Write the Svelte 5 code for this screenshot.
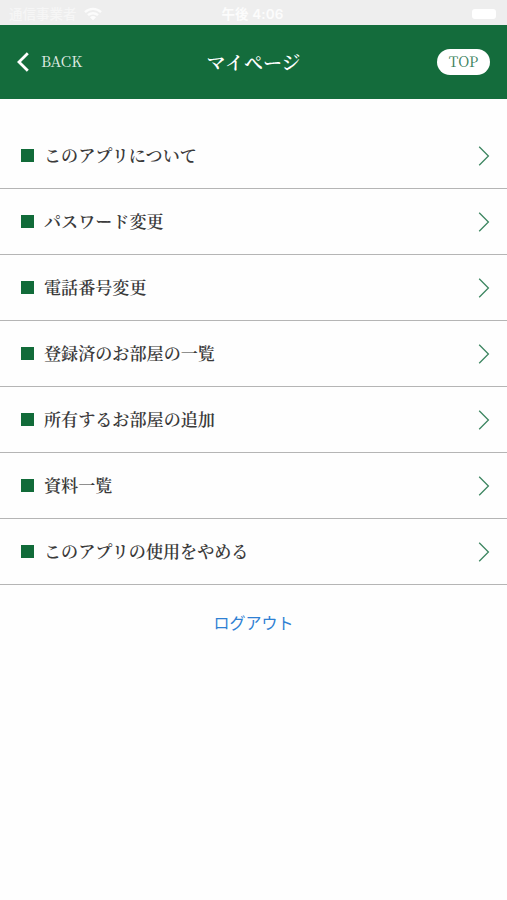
<script lang="ts">
    const menuItems: string[] = [
        'このアプリについて',
        'パスワード変更',
        '電話番号変更',
        '登録済のお部屋の一覧',
        '所有するお部屋の追加',
        '資料一覧',
        'このアプリの使用をやめる'
    ];
</script>

<div class="screen">
    <!-- Status Bar -->
    <div class="status-bar">
        <div class="carrier">
            <span>通信事業者</span>
            <svg class="wifi" width="18" height="14" viewBox="0 0 18 14" fill="none" stroke="currentColor" stroke-width="2.4">
                <path d="M1 5.2C5.6 0.8 12.4 0.8 17 5.2" />
                <path d="M4 8.2C6.8 5.6 11.2 5.6 14 8.2" />
                <path d="M9 13.2L6 10.2C7.8 8.7 10.2 8.7 12 10.2Z" fill="currentColor" stroke="none" />
            </svg>
        </div>
        <span class="time">午後 4:06</span>
        <span class="battery"></span>
    </div>

    <header class="header">
        <button class="back">
            <svg width="12" height="20" viewBox="0 0 12 20" fill="none" stroke="currentColor" stroke-width="2.8">
                <path d="M10.8 1.2L2 10L10.8 18.8" />
            </svg>
            <span>BACK</span>
        </button>
        <h1 class="title">マイページ</h1>
        <button class="top">TOP</button>
    </header>

    <nav class="menu">
        {#each menuItems as item}
            <button class="menu-item">
                <span class="marker"></span>
                <span class="label">{item}</span>
                <svg class="chevron" width="12" height="20" viewBox="0 0 12 20" fill="none" stroke="currentColor" stroke-width="1.3">
                    <path d="M1.2 0.8L10.4 10L1.2 19.2" />
                </svg>
            </button>
        {/each}
    </nav>

    <button class="logout">ログアウト</button>
</div>

<style>
:global(body) {
    margin: 0;
    background: #fefefe;
}

.screen {
    min-height: 900px;
    background: #fefefe;
    font-family: "Noto Serif CJK JP", "Liberation Serif", "Noto Sans CJK JP", serif;
}

button {
    margin: 0;
    padding: 0;
    border: 0;
    background: none;
    font-family: inherit;
    cursor: pointer;
}

svg {
    display: block;
    flex: none;
}

/* Status Bar */
.status-bar {
    display: grid;
    grid-template-columns: 1fr auto 1fr;
    align-items: center;
    box-sizing: border-box;
    height: 25px;
    padding: 2px 11px 0 9px;
    background: #eeeeee;
    color: #fcfcfc;
    font-family: Inter, "Noto Sans CJK JP", sans-serif;
    font-size: 13.5px;
    line-height: 20px;
}

.carrier {
    display: flex;
    align-items: center;
    gap: 7px;
    color: #f6f6f6;
    font-weight: 500;
}

.wifi {
    color: #fcfcfc;
}

.time {
    font-weight: 600;
    letter-spacing: 0.1px;
}

.battery {
    justify-self: end;
    width: 24px;
    height: 10px;
    border-radius: 3px;
    background: #ffffff;
}

/* Header */
.header {
    display: grid;
    grid-template-columns: 1fr auto 1fr;
    align-items: center;
    box-sizing: border-box;
    height: 73.5px;
    padding: 0 17px;
    background: #146c3c;
    color: #ffffff;
}

.back {
    display: flex;
    align-items: center;
    gap: 12px;
    color: #ffffff;
    font-size: 15px;
    line-height: 20px;
}

.back span {
    padding-bottom: 2px;
    color: #e2efe8;
}

.title {
    margin: 0;
    font-size: 19px;
    font-weight: 600;
    line-height: 28px;
}

.top {
    justify-self: end;
    width: 53px;
    height: 26px;
    padding-bottom: 2px;
    border-radius: 13px;
    background: #ffffff;
    color: #38805a;
    font-size: 14.4px;
    line-height: 24px;
}

/* Menu */
.menu {
    padding-top: 24.5px;
}

.menu-item {
    display: flex;
    align-items: center;
    box-sizing: border-box;
    width: 100%;
    height: 66px;
    padding: 0 17px 0 21px;
    border-bottom: 1px solid #b5b5b5;
    text-align: left;
}

.marker {
    flex: none;
    width: 13px;
    height: 13px;
    margin-right: 10px;
    background: #116b39;
}

.label {
    flex: 1;
    padding-bottom: 2px;
    color: #3a3a3a;
    font-size: 17.1px;
    font-weight: 600;
    line-height: 24px;
}

.chevron {
    color: #3c8560;
}

/* Logout */
.logout {
    display: block;
    margin: 25px auto 0;
    color: #2e80d3;
    font-family: "Noto Sans CJK JP", sans-serif;
    font-size: 16px;
    line-height: 24px;
}
</style>
